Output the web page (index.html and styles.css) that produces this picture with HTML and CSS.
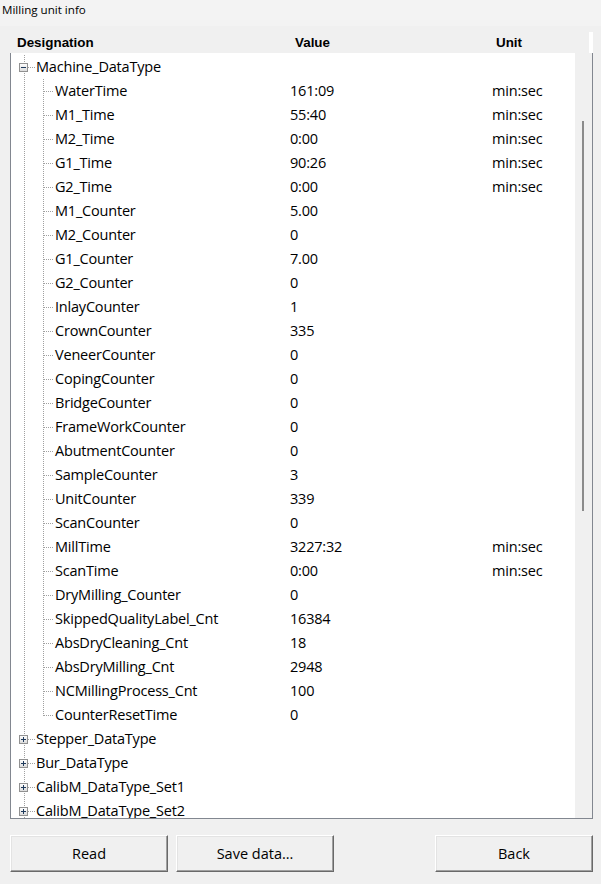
FILE: index.html
```html
<!DOCTYPE html>
<html>
<head>
<meta charset="utf-8">
<link rel="stylesheet" href="styles.css">
</head>
<body>
<div class="title">Milling unit info</div>
<div class="panel">
  <div class="header">
    <div class="hcell c1">Designation</div>
    <div class="hcell c2">Value</div>
    <div class="hcell c3">Unit</div>
  </div>
  <div class="tree">
    <div class="rows">
      <div class="row root"><div class="name"><span class="exp minus"></span><span class="lbl">Machine_DataType</span></div><div></div><div></div></div>
      <div class="row child"><div class="name"><span class="lbl">WaterTime</span></div><div>161:09</div><div>min:sec</div></div>
      <div class="row child"><div class="name"><span class="lbl">M1_Time</span></div><div>55:40</div><div>min:sec</div></div>
      <div class="row child"><div class="name"><span class="lbl">M2_Time</span></div><div>0:00</div><div>min:sec</div></div>
      <div class="row child"><div class="name"><span class="lbl">G1_Time</span></div><div>90:26</div><div>min:sec</div></div>
      <div class="row child"><div class="name"><span class="lbl">G2_Time</span></div><div>0:00</div><div>min:sec</div></div>
      <div class="row child"><div class="name"><span class="lbl">M1_Counter</span></div><div>5.00</div><div></div></div>
      <div class="row child"><div class="name"><span class="lbl">M2_Counter</span></div><div>0</div><div></div></div>
      <div class="row child"><div class="name"><span class="lbl">G1_Counter</span></div><div>7.00</div><div></div></div>
      <div class="row child"><div class="name"><span class="lbl">G2_Counter</span></div><div>0</div><div></div></div>
      <div class="row child"><div class="name"><span class="lbl">InlayCounter</span></div><div>1</div><div></div></div>
      <div class="row child"><div class="name"><span class="lbl">CrownCounter</span></div><div>335</div><div></div></div>
      <div class="row child"><div class="name"><span class="lbl">VeneerCounter</span></div><div>0</div><div></div></div>
      <div class="row child"><div class="name"><span class="lbl">CopingCounter</span></div><div>0</div><div></div></div>
      <div class="row child"><div class="name"><span class="lbl">BridgeCounter</span></div><div>0</div><div></div></div>
      <div class="row child"><div class="name"><span class="lbl">FrameWorkCounter</span></div><div>0</div><div></div></div>
      <div class="row child"><div class="name"><span class="lbl">AbutmentCounter</span></div><div>0</div><div></div></div>
      <div class="row child"><div class="name"><span class="lbl">SampleCounter</span></div><div>3</div><div></div></div>
      <div class="row child"><div class="name"><span class="lbl">UnitCounter</span></div><div>339</div><div></div></div>
      <div class="row child"><div class="name"><span class="lbl">ScanCounter</span></div><div>0</div><div></div></div>
      <div class="row child"><div class="name"><span class="lbl">MillTime</span></div><div>3227:32</div><div>min:sec</div></div>
      <div class="row child"><div class="name"><span class="lbl">ScanTime</span></div><div>0:00</div><div>min:sec</div></div>
      <div class="row child"><div class="name"><span class="lbl">DryMilling_Counter</span></div><div>0</div><div></div></div>
      <div class="row child"><div class="name"><span class="lbl">SkippedQualityLabel_Cnt</span></div><div>16384</div><div></div></div>
      <div class="row child"><div class="name"><span class="lbl">AbsDryCleaning_Cnt</span></div><div>18</div><div></div></div>
      <div class="row child"><div class="name"><span class="lbl">AbsDryMilling_Cnt</span></div><div>2948</div><div></div></div>
      <div class="row child"><div class="name"><span class="lbl">NCMillingProcess_Cnt</span></div><div>100</div><div></div></div>
      <div class="row child last"><div class="name"><span class="lbl">CounterResetTime</span></div><div>0</div><div></div></div>
      <div class="row root"><div class="name"><span class="exp plus"></span><span class="lbl">Stepper_DataType</span></div><div></div><div></div></div>
      <div class="row root"><div class="name"><span class="exp plus"></span><span class="lbl">Bur_DataType</span></div><div></div><div></div></div>
      <div class="row root"><div class="name"><span class="exp plus"></span><span class="lbl">CalibM_DataType_Set1</span></div><div></div><div></div></div>
      <div class="row root"><div class="name"><span class="exp plus"></span><span class="lbl">CalibM_DataType_Set2</span></div><div></div><div></div></div>
    </div>
    <div class="scroll"><div class="thumb"></div></div>
  </div>
</div>
<div class="buttons">
  <button class="btn">Read</button>
  <button class="btn save">Save data...</button>
  <button class="btn back">Back</button>
</div>
</body>
</html>
```
FILE: styles.css
```css
html, body {
  margin: 0;
  padding: 0;
}
body {
  width: 601px;
  height: 884px;
  background: #f0f0f0;
  font-family: "Segoe UI", "Open Sans", "Noto Sans", sans-serif;
  color: #000;
  overflow: hidden;
}
.title {
  height: 26px;
  box-sizing: border-box;
  padding: 1px 0 0 2px;
  font-size: 11.6px;
  line-height: 18px;
  background: #f3f3f3;
  margin-bottom: 6px;
}
.panel {
  margin-left: 10px;
  width: 583px;
}
.header {
  display: grid;
  grid-template-columns: 279px 202px 1fr;
  height: 21px;
  background: #f0f0f0;
  border-right: 4px solid #fff;
  font-family: "Liberation Sans", Arial, sans-serif;
  font-weight: bold;
  font-size: 13.4px;
  line-height: 21px;
}
.hcell {
  padding-left: 7px;
}
.hcell.c2 { padding-left: 6px; }
.hcell.c3 { padding-left: 5px; }
.tree {
  display: flex;
  height: 765px;
  border: 1px solid #828790;
  border-top: none;
  background: #fff;
}
.rows {
  flex: 1;
  padding-top: 2px;
  overflow: hidden;
}
.scroll {
  width: 17px;
  background: #f0f0f0;
  padding: 68px 0 0 7px;
  box-sizing: border-box;
}
.thumb {
  width: 2px;
  height: 390px;
  background: #8b8b8b;
}
.row {
  display: grid;
  grid-template-columns: 279px 202px 1fr;
  height: 24px;
  line-height: 24px;
  font-size: 14.5px;
  letter-spacing: -0.2px;
  white-space: nowrap;
}
.name {
  display: flex;
  align-items: center;
  background:
    repeating-linear-gradient(#a0a0a0 0 1px, transparent 1px 2px) 13px 0 / 1px 100% no-repeat;
}
.root .name {
  background:
    repeating-linear-gradient(to right, #a0a0a0 0 1px, transparent 1px 2px) 17px 12px / 7px 1px no-repeat,
    repeating-linear-gradient(#a0a0a0 0 1px, transparent 1px 2px) 13px 0 / 1px 100% no-repeat;
}
.child .name {
  background:
    repeating-linear-gradient(to right, #a0a0a0 0 1px, transparent 1px 2px) 33px 12px / 9px 1px no-repeat,
    repeating-linear-gradient(#a0a0a0 0 1px, transparent 1px 2px) 32px 0 / 1px 100% no-repeat,
    repeating-linear-gradient(#a0a0a0 0 1px, transparent 1px 2px) 13px 0 / 1px 100% no-repeat;
}
.child.last .name {
  background:
    repeating-linear-gradient(to right, #a0a0a0 0 1px, transparent 1px 2px) 33px 12px / 9px 1px no-repeat,
    repeating-linear-gradient(#a0a0a0 0 1px, transparent 1px 2px) 32px 0 / 1px 13px no-repeat,
    repeating-linear-gradient(#a0a0a0 0 1px, transparent 1px 2px) 13px 0 / 1px 100% no-repeat;
}
.exp {
  position: relative;
  width: 9px;
  height: 9px;
  box-sizing: border-box;
  margin-left: 8px;
  border: 1px solid #919191;
  background: linear-gradient(#fdfdfd, #dcdcdc);
  flex: none;
}
.exp::before {
  content: "";
  position: absolute;
  left: 1px;
  top: 3px;
  width: 5px;
  height: 1px;
  background: #1f3a5c;
}
.exp.plus::after {
  content: "";
  position: absolute;
  left: 3px;
  top: 1px;
  width: 1px;
  height: 5px;
  background: #1f3a5c;
}
.root .lbl { margin-left: 8px; }
.child .lbl { margin-left: 44px; }
.buttons {
  display: flex;
  margin: 16px 0 0 10px;
}
.btn {
  width: 158px;
  height: 37px;
  margin: 0;
  padding: 0;
  font-family: "Segoe UI", "Open Sans", "Noto Sans", sans-serif;
  font-size: 14.5px;
  color: #000;
  background: #f0f0f0;
  border: none;
  border-top: 1px solid #fff;
  border-left: 1px solid #fff;
  border-right: 1px solid #696969;
  border-bottom: 1px solid #696969;
  box-shadow: inset -1px -1px 0 #a0a0a0, inset 1px 1px 0 #e3e3e3;
}
.btn.save { margin-left: 8px; }
.btn.back { margin-left: 101px; }
```
